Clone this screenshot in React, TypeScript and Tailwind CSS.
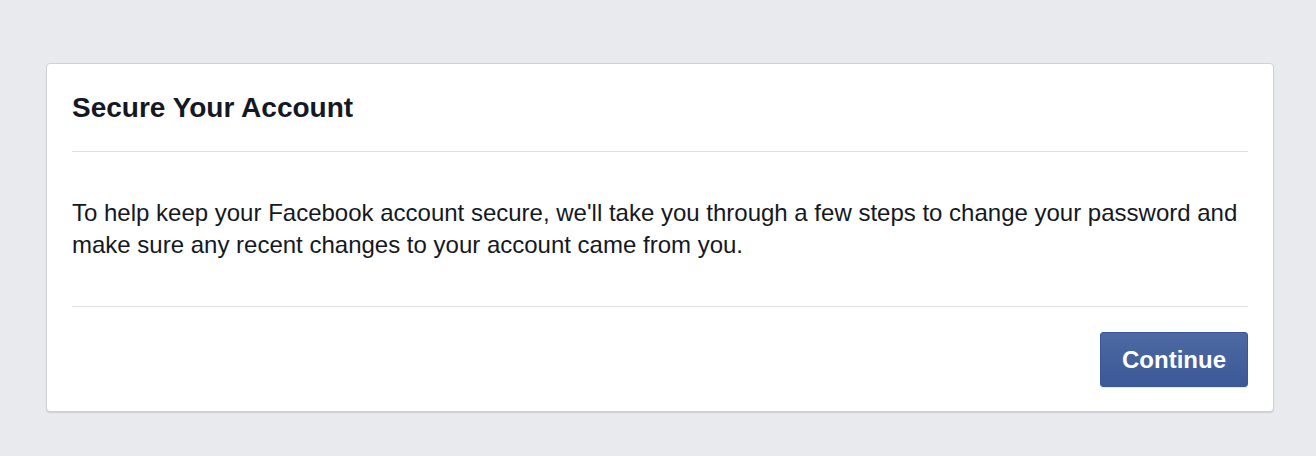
export default function App() {
  return (
    <div className="min-h-[456px] w-full bg-[#e9eaed] pl-[46px] pt-[63px]" style={{ fontFamily: '"Liberation Sans", Arial, Helvetica, sans-serif' }}>
      <div className="w-[1228px] rounded-[4px] border border-[#cfd1d5] bg-white px-[25px] shadow-[0_1px_1px_rgba(0,0,0,0.12)]">
        <div className="flex h-[88px] items-center border-b border-[#dddfe2]">
          <h1 className="text-[28px] font-bold leading-[32px] text-[#141823]">Secure Your Account</h1>
        </div>
        <div className="border-b border-[#dddfe2] py-[45px]">
          <p className="text-[24px] leading-[32px] text-[#141823]">
            To help keep your Facebook account secure, we'll take you through a few steps to change your password and make sure any recent changes to your account came from you.
          </p>
        </div>
        <div className="flex justify-end pb-[24px] pt-[25px]">
          <button className="h-[55px] w-[148px] rounded-[3px] border border-[#365899] bg-gradient-to-b from-[#4e69a2] to-[#3b5998] text-[24px] font-bold text-white shadow-[0_1px_1px_rgba(0,0,0,0.1)]">
            Continue
          </button>
        </div>
      </div>
    </div>
  );
}
